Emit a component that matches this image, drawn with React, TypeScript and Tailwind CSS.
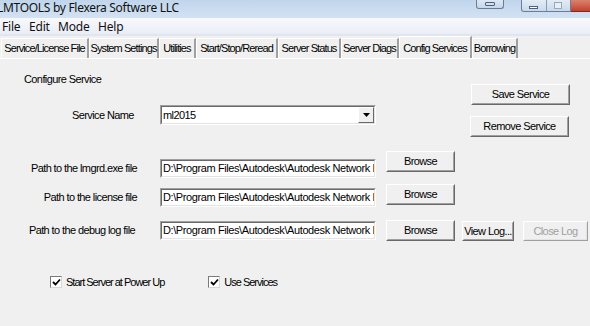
import React from "react";

const sans = { fontFamily: '"Liberation Sans", Arial, sans-serif' };

function Btn({ label, w, h = 21, disabled = false, className = "" }: { label: string; w: number; h?: number; disabled?: boolean; className?: string }) {
  return (
    <div
      className={`border border-t-white border-l-white ${disabled ? "border-r-[#a0a0a0] border-b-[#a0a0a0]" : "border-r-[#696969] border-b-[#696969]"} bg-[#f0f0f0] ${className}`}
      style={{ width: w, height: h }}
    >
      <div
        className={`w-full h-full border border-t-[#f0f0f0] border-l-[#f0f0f0] ${disabled ? "border-r-[#e3e3e3] border-b-[#e3e3e3] text-[#a0a0a0]" : "border-r-[#a0a0a0] border-b-[#a0a0a0] text-black"} flex items-center justify-center text-[11px] tracking-[-0.6px]`}
      >
        {label}
      </div>
    </div>
  );
}

function Field({ value, className = "" }: { value: string; className?: string }) {
  return (
    <div className={`w-[216px] h-[19px] border border-t-[#a0a0a0] border-l-[#a0a0a0] border-r-white border-b-white ${className}`}>
      <div className="w-full h-full border border-t-[#696969] border-l-[#696969] border-r-[#e3e3e3] border-b-[#e3e3e3] bg-white overflow-hidden whitespace-nowrap text-[11px] tracking-[-0.4px] leading-[15px] pl-[1px]">
        {value}
      </div>
    </div>
  );
}

function Check({ label, className = "" }: { label: string; className?: string }) {
  return (
    <div className={`flex items-center ${className}`}>
      <div className="w-[12px] h-[12px] border border-t-[#7a7a7a] border-l-[#7a7a7a] border-r-[#d8d8d8] border-b-[#d8d8d8] bg-white flex items-center justify-center">
        <svg width="9" height="9" viewBox="0 0 9 9">
          <path d="M1 4 L3.5 6.5 L8 1.5" stroke="#000" strokeWidth="1.8" fill="none" />
        </svg>
      </div>
      <span className="ml-[4px] text-[11px] tracking-[-1px]">{label}</span>
    </div>
  );
}

export default function App() {
  const tabs: { label: string; w: number; sel?: boolean }[] = [
    { label: "Service/License File", w: 88 },
    { label: "System Settings", w: 70 },
    { label: "Utilities", w: 37 },
    { label: "Start/Stop/Reread", w: 82 },
    { label: "Server Status", w: 63 },
    { label: "Server Diags", w: 58 },
    { label: "Config Services", w: 73, sel: true },
    { label: "Borrowing", w: 46 },
  ];
  const path = "D:\\Program Files\\Autodesk\\Autodesk Network Li";
  return (
    <div className="w-[590px] h-[326px] overflow-hidden bg-[#f0f0f0] text-black relative" style={sans}>
      {/* Title bar */}
      <div className="h-[18px] bg-gradient-to-b from-[#c0d5ec] to-[#d3e2f3] flex items-start relative">
        <span
          className="ml-[-3px] mt-[1px] text-[12px] leading-[14px] tracking-[-0.3px] text-[#111]"
          style={{ fontFamily: '"Noto Sans", "Open Sans", sans-serif' }}
        >
          LMTOOLS by Flexera Software LLC
        </span>
        <div className="absolute left-[476px] top-0 w-[28px] h-[9px] rounded-b-[3px] border border-t-0 border-[#6a7d96] bg-gradient-to-b from-[#dce7f3] to-[#c6d7ea] flex items-center justify-center">
          <div className="w-[10px] h-[4px] border border-[#50607a] rounded-[1px]" />
        </div>
        <div className="absolute left-[521px] top-0 w-[50px] h-[12px] rounded-bl-[3px] border border-t-0 border-[#6a7d96] bg-gradient-to-b from-[#e3ecf6] to-[#c9d9eb] flex">
          <div className="w-[25px] h-full border-r border-[#8a9ab0] flex items-end justify-center pb-[2px]">
            <div className="w-[9px] h-[3px] bg-white border border-[#50607a]" />
          </div>
          <div className="w-[24px] h-full flex items-center justify-center">
            <div className="w-[8px] h-[7px] border border-[#9aa8bb] bg-[#e8eef6]" />
          </div>
        </div>
        <div className="absolute left-[571px] top-0 w-[22px] h-[12px] bg-gradient-to-b from-[#d9826f] to-[#c3402b] border-b border-[#7a2a20]" />
      </div>
      {/* Menu bar */}
      <div
        className="h-[16px] bg-gradient-to-b from-[#f8f9fc] to-[#e9edf6] flex items-end pb-[0px] text-[12px] leading-[15px] tracking-[-0.2px] text-[#111]"
        style={{ fontFamily: '"Noto Sans", "Open Sans", sans-serif' }}
      >
        <span className="ml-[2px] w-[27px]">File</span>
        <span className="w-[29px]">Edit</span>
        <span className="w-[40px]">Mode</span>
        <span>Help</span>
      </div>
      <div className="h-[2px] bg-[#e1e5ef]" />
      {/* Tabs */}
      <div className="h-[22px] flex items-end pl-[1px] relative">
        {tabs.map((t) =>
          t.sel ? (
            <div
              key={t.label}
              className="h-[22px] bg-[#f0f0f0] border-t border-l border-white border-r-2 border-r-[#a0a0a0] flex items-start justify-center pt-[3px] text-[11px] tracking-[-0.9px] whitespace-nowrap relative z-10"
              style={{ width: t.w }}
            >
              {t.label}
            </div>
          ) : (
            <div
              key={t.label}
              className="h-[20px] border-t border-l border-white border-r-2 border-r-[#a0a0a0] flex items-center justify-center text-[11px] tracking-[-0.9px] whitespace-nowrap"
              style={{ width: t.w }}
            >
              {t.label}
            </div>
          )
        )}
        <div className="absolute left-0 right-0 bottom-[-1px] h-[1px] bg-white" />
      </div>
      {/* Content */}
      <div className="flex">
        <div className="w-[380px]">
          <div className="ml-[24px] mt-[15px] text-[11px] tracking-[-0.6px] leading-[13px]">Configure Service</div>
          <div className="flex items-center mt-[19px]">
            <div className="ml-[72px] w-[88px] text-[11px] tracking-[-0.6px]">Service Name</div>
            <div className="w-[216px] h-[20px] border border-t-[#a0a0a0] border-l-[#a0a0a0] border-r-white border-b-white">
              <div className="w-full h-full border border-t-[#696969] border-l-[#696969] border-r-[#e3e3e3] border-b-[#e3e3e3] bg-white flex items-center justify-between">
                <span className="pl-[1px] text-[11px] tracking-[-0.6px]">ml2015</span>
                <div className="w-[16px] h-[16px] border border-t-white border-l-white border-r-[#696969] border-b-[#696969] bg-[#f0f0f0] flex items-center justify-center">
                  <svg width="7" height="4" viewBox="0 0 7 4">
                    <path d="M0 0 H7 L3.5 4 Z" fill="#000" />
                  </svg>
                </div>
              </div>
            </div>
          </div>
        </div>
        <div className="flex flex-col mt-[26px] ml-[90px] gap-[11px]">
          <Btn label="Save Service" w={99} className="ml-[1px]" />
          <Btn label="Remove Service" w={99} />
        </div>
      </div>
      <div className="mt-[14px]">
        <div className="flex items-start h-[27px]">
          <div className="w-[137px] mt-[8px] h-[19px] flex items-center justify-end text-[11px] tracking-[-0.6px]">Path to the lmgrd.exe file</div>
          <Field value={path} className="ml-[23px] mt-[8px]" />
          <Btn label="Browse" w={69} className="ml-[10px]" />
        </div>
        <div className="flex items-start h-[23px] mt-[6px]">
          <div className="w-[137px] mt-[4px] h-[19px] flex items-center justify-end text-[11px] tracking-[-0.6px]">Path to the license file</div>
          <Field value={path} className="ml-[23px] mt-[4px]" />
          <Btn label="Browse" w={69} className="ml-[10px]" />
        </div>
        <div className="flex items-start h-[21px] mt-[13px]">
          <div className="w-[135px] mt-[1px] h-[19px] flex items-center justify-end text-[11px] tracking-[-0.6px]">Path to the debug log file</div>
          <Field value={path} className="ml-[25px] mt-[1px]" />
          <Btn label="Browse" w={69} className="ml-[10px]" />
          <Btn label="View Log..." w={52} h={20} className="ml-[7px] mt-[1px]" />
          <Btn label="Close Log" w={65} h={20} disabled className="ml-[9px] mt-[1px]" />
        </div>
      </div>
      <div className="flex mt-[33px]">
        <Check label="Start Server at Power Up" className="ml-[50px]" />
        <Check label="Use Services" className="ml-[44px]" />
      </div>
    </div>
  );
}
